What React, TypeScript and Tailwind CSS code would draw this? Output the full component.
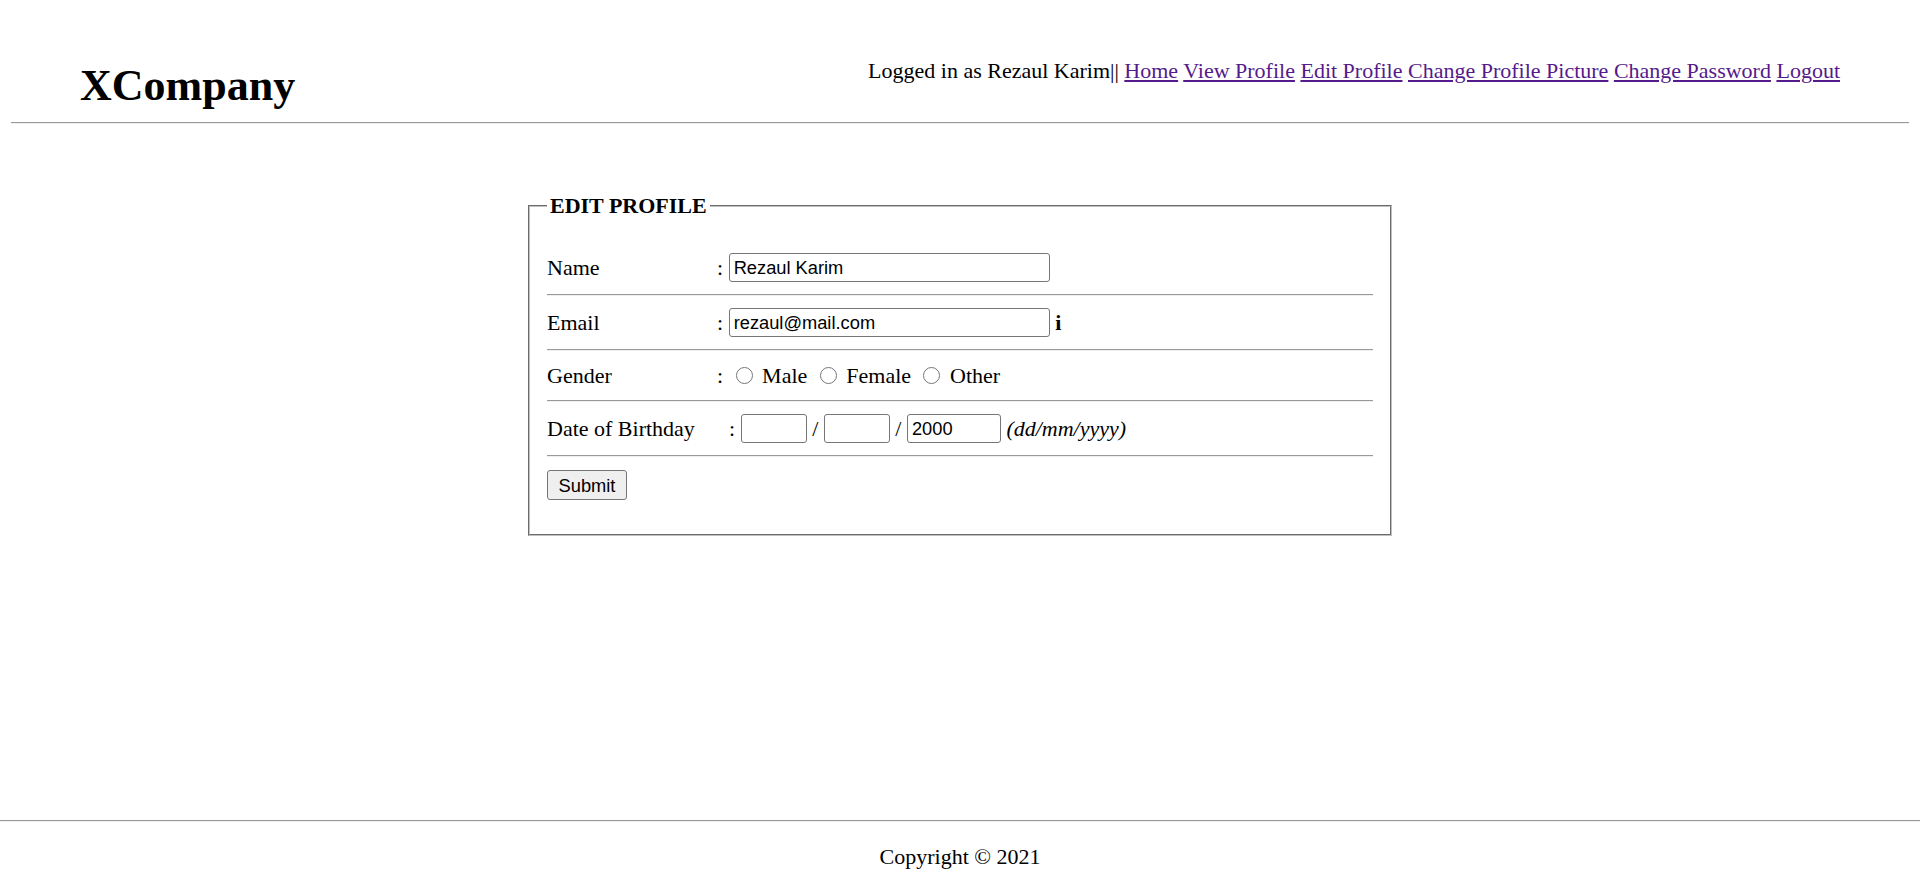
import React from "react";

const inputCls =
  "h-[29px] border border-[#767676] rounded-[3px] px-[4px] bg-white text-black outline-none font-['Liberation_Sans',Arial,sans-serif] text-[18.3px] leading-[21px]";

function Hr() {
  return <div className="h-[2px] border-t border-b border-t-[#9a9a9a] border-b-[#eeeeee]" />;
}

function Radio() {
  return (
    <input
      type="radio"
      name="gender"
      className="ml-[12.4px] mr-[9.6px] w-[17px] h-[17px] m-0 shrink-0"
    />
  );
}

export default function App() {
  return (
    <div className="min-h-screen flex flex-col bg-white text-black font-['Liberation_Serif','Times_New_Roman',serif] text-[22px] leading-[25px]">
      <header className="mx-[11px]">
        <div className="flex justify-between items-start px-[69px]">
          <h1 className="mt-[61px] text-[44px] leading-[49px] font-bold">XCompany</h1>
          <nav className="mt-[58px] whitespace-nowrap">
            Logged in as Rezaul Karim||{" "}
            <a href="#" className="text-[#551a8b] underline">Home</a>{" "}
            <a href="#" className="text-[#551a8b] underline">View Profile</a>{" "}
            <a href="#" className="text-[#551a8b] underline">Edit Profile</a>{" "}
            <a href="#" className="text-[#551a8b] underline">Change Profile Picture</a>{" "}
            <a href="#" className="text-[#551a8b] underline">Change Password</a>{" "}
            <a href="#" className="text-[#551a8b] underline">Logout</a>
          </nav>
        </div>
        <div className="mt-[12px]">
          <Hr />
        </div>
      </header>

      <main className="flex justify-center">
        <fieldset className="mt-[69px] w-[864px] border-2 [border-style:groove] border-[#c0c0c0] px-[17px] pt-0 pb-[34px]">
          <legend className="px-[3px] font-bold leading-[25px]">EDIT PROFILE</legend>
          <div className="flex flex-col pt-[23px]">
            <div className="flex items-center h-[29px] my-[12px]">
              <span className="w-[170px] shrink-0">Name</span>
              <span>:</span>
              <input className={`${inputCls} ml-[5.5px] w-[321px]`} defaultValue="Rezaul Karim" />
            </div>
            <Hr />
            <div className="flex items-center h-[29px] my-[12px]">
              <span className="w-[170px] shrink-0">Email</span>
              <span>:</span>
              <input className={`${inputCls} ml-[5.5px] w-[321px]`} defaultValue="rezaul@mail.com" />
              <span className="ml-[5.5px] font-bold">i</span>
            </div>
            <Hr />
            <div className="flex items-center h-[25px] my-[12px]">
              <span className="w-[170px] shrink-0">Gender</span>
              <span>:</span>
              <Radio />
              <span>Male</span>
              <Radio />
              <span>Female</span>
              <Radio />
              <span>Other</span>
            </div>
            <Hr />
            <div className="flex items-center h-[29px] my-[12px]">
              <span className="w-[182px] shrink-0">Date of Birthday</span>
              <span>:</span>
              <input className={`${inputCls} ml-[5.5px] w-[66px]`} defaultValue="" />
              <span className="ml-[5.5px]">/</span>
              <input className={`${inputCls} ml-[5.5px] w-[66px]`} defaultValue="" />
              <span className="ml-[5.5px]">/</span>
              <input className={`${inputCls} ml-[5.5px] w-[94px]`} defaultValue="2000" />
              <span className="ml-[5.5px] italic">(dd/mm/yyyy)</span>
            </div>
            <Hr />
            <div className="mt-[13px]">
              <button
                type="button"
                className="w-[80px] h-[30px] border border-[#767676] rounded-[3px] bg-[#efefef] text-black font-['Liberation_Sans',Arial,sans-serif] text-[18.3px] leading-[21px]"
              >
                Submit
              </button>
            </div>
          </div>
        </fieldset>
      </main>

      <footer className="mt-auto">
        <Hr />
        <p className="text-center pt-[22px] pb-[16px] leading-[25px]">Copyright © 2021</p>
      </footer>
    </div>
  );
}
